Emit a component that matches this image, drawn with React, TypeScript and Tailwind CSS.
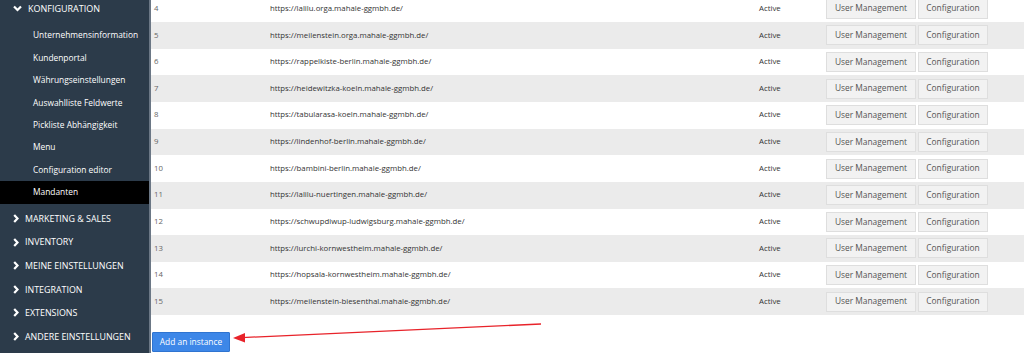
import React from "react";

const rows = [
  [4, "https://lalilu.orga.mahale-ggmbh.de/"],
  [5, "https://meilenstein.orga.mahale-ggmbh.de/"],
  [6, "https://rappelkiste-berlin.mahale-ggmbh.de/"],
  [7, "https://heidewitzka-koeln.mahale-ggmbh.de/"],
  [8, "https://tabularasa-koeln.mahale-ggmbh.de/"],
  [9, "https://lindenhof-berlin.mahale-ggmbh.de/"],
  [10, "https://bambini-berlin.mahale-ggmbh.de/"],
  [11, "https://lalilu-nuertingen.mahale-ggmbh.de/"],
  [12, "https://schwupdiwup-ludwigsburg.mahale-ggmbh.de/"],
  [13, "https://lurchi-kornwestheim.mahale-ggmbh.de/"],
  [14, "https://hopsala-kornwestheim.mahale-ggmbh.de/"],
  [15, "https://meilenstein-biesenthal.mahale-ggmbh.de/"],
] as const;

const subItems = [
  "Unternehmensinformation",
  "Kundenportal",
  "Währungseinstellungen",
  "Auswahlliste Feldwerte",
  "Pickliste Abhängigkeit",
  "Menu",
  "Configuration editor",
  "Mandanten",
];

const topItems = [
  "MARKETING & SALES",
  "INVENTORY",
  "MEINE EINSTELLUNGEN",
  "INTEGRATION",
  "EXTENSIONS",
  "ANDERE EINSTELLUNGEN",
];

function ChevronRight() {
  return (
    <svg width="6" height="9" viewBox="0 0 6 9" className="shrink-0">
      <polyline points="1.2,1 4.5,4.5 1.2,8" fill="none" stroke="#ffffff" strokeWidth="2.2" />
    </svg>
  );
}

function ChevronDown() {
  return (
    <svg width="9" height="7" viewBox="0 0 9 7" className="shrink-0">
      <polyline points="1,1.5 4.5,5 8,1.5" fill="none" stroke="#ffffff" strokeWidth="2.2" />
    </svg>
  );
}

export default function App() {
  return (
    <div
      className="relative w-[1024px] h-[353px] overflow-hidden bg-white flex"
      style={{ fontFamily: '"Open Sans", "Noto Sans", sans-serif' }}
    >
      {/* Sidebar */}
      <div className="w-[151px] shrink-0 bg-[#2c3b4a] border-r-2 border-[#6b7785] text-white">
        <div className="-mt-[3px]">
          <div className="h-[23.6px] flex items-center pl-[13px] gap-[6px]">
            <ChevronDown />
            <span className="text-[9px]">KONFIGURATION</span>
          </div>
          <div className="pt-[4px] pb-[3px]">
            {subItems.map((s) => (
              <div
                key={s}
                className={`h-[22.4px] flex items-center pl-[33px] text-[8.4px] ${
                  s === "Mandanten" ? "bg-black" : ""
                }`}
              >
                {s}
              </div>
            ))}
          </div>
          {topItems.map((t) => (
            <div key={t} className="h-[23.6px] flex items-center pl-[13px] gap-[6px]">
              <ChevronRight />
              <span className="text-[8.9px]">{t}</span>
            </div>
          ))}
        </div>
      </div>

      {/* Main */}
      <div className="flex-1">
        <div className="-mt-[4.6px]">
          {rows.map(([n, url], i) => (
            <div
              key={n}
              className={`h-[26.65px] flex items-center text-[7.8px] text-[#333] ${
                i % 2 === 1 ? "bg-[#ebebeb]" : "bg-white"
              }`}
            >
              <div className="w-[119px] pl-[3px] text-[#666]">{n}</div>
              <div className="w-[489px]">{url}</div>
              <div className="w-[67px]">Active</div>
              <div className="flex gap-[2px]">
                <button className="h-[20px] w-[90px] bg-[#f2f2f2] border border-[#dedede] text-[8.4px] text-[#555]">
                  User Management
                </button>
                <button className="h-[20px] w-[70px] bg-[#f2f2f2] border border-[#dedede] text-[8.4px] text-[#555]">
                  Configuration
                </button>
              </div>
            </div>
          ))}
          <div className="pt-[12px]">
            <button className="h-[20px] w-[78px] ml-[1px] bg-[#3d87e8] border border-[#2f74d0] text-white text-[8.4px] rounded-[1px]">
              Add an instance
            </button>
          </div>
        </div>
      </div>

      {/* Annotation arrow */}
      <svg className="absolute left-0 top-0 pointer-events-none" width="1024" height="353">
        <line x1="541" y1="324" x2="242" y2="337.6" stroke="#e8232a" strokeWidth="1.3" />
        <polygon points="233,338 245,333 245,342.5" fill="#e8232a" />
      </svg>
    </div>
  );
}
